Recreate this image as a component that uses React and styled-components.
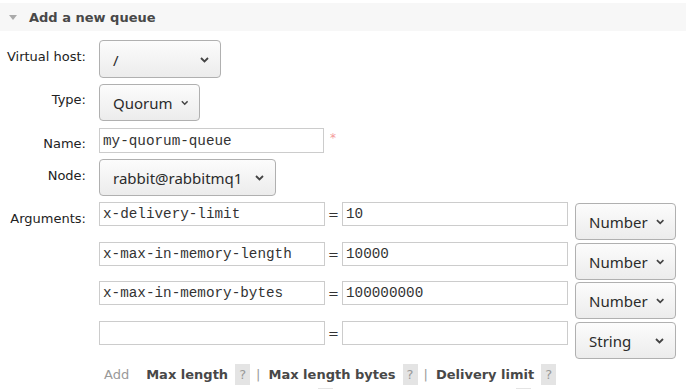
import React from 'react';
import styled, { createGlobalStyle } from 'styled-components';

const GlobalStyle = createGlobalStyle`
  body {
    margin: 0;
    background: #fff;
    font-family: "DejaVu Sans", Verdana, sans-serif;
    font-size: 13px;
    color: #222;
  }
`;

const Page = styled.div`
  padding-top: 3px;
`;

const SectionHead = styled.h2`
  margin: 0;
  height: 28px;
  display: flex;
  align-items: center;
  gap: 12px;
  padding-left: 9px;
  background: #f7f7f7;
  font-size: 13px;
  font-weight: bold;
  color: #484848;
`;

const Arrow = styled.span`
  width: 0;
  height: 0;
  border-left: 4px solid transparent;
  border-right: 4px solid transparent;
  border-top: 5px solid #aaa;
`;

const Form = styled.div`
  display: grid;
  grid-template-columns: 86px 1fr;
  column-gap: 13px;
  row-gap: 6px;
  padding-top: 9px;
`;

const Label = styled.div`
  text-align: right;
  white-space: nowrap;
  padding-top: ${p => p.$top || 8}px;
  color: #222;
`;

const Field = styled.div`
  display: flex;
  align-items: flex-start;
  padding-top: ${p => p.$top || 0}px;
`;

const SelectBox = styled.div`
  box-sizing: border-box;
  width: ${p => p.$w}px;
  height: ${p => p.$h || 37}px;
  margin-top: ${p => p.$top || 0}px;
  flex-shrink: 0;
  display: flex;
  align-items: center;
  justify-content: space-between;
  gap: 8px;
  padding: 1px 11px 0 13px;
  border: 1px solid #b0b0b0;
  border-radius: 4px;
  background: linear-gradient(#fcfcfc, #ececec);
  font-family: "Noto Sans", sans-serif;
  font-size: 15px;
  color: #2b2b2b;
  white-space: nowrap;
`;

const TextInput = styled.input`
  box-sizing: border-box;
  width: ${p => p.$w || 226}px;
  height: ${p => p.$h || 24}px;
  flex-shrink: 0;
  margin: 0;
  padding: 0 3px;
  border: 1px solid #ccc;
  border-radius: 0;
  background: #fff;
  font-family: "Liberation Mono", "DejaVu Sans Mono", monospace;
  font-size: 14.3px;
  color: #333;
  outline: none;
`;

const Required = styled.span`
  margin: 3px 0 0 6px;
  color: #f49a9a;
  font-size: 12px;
`;

const ArgCell = styled.div`
  display: flex;
  flex-direction: column;
`;

const ArgList = styled.div`
  display: flex;
  flex-direction: column;
  gap: 1.5px;
`;

const ArgRow = styled.div`
  display: flex;
  align-items: flex-start;
  height: 38px;
`;

const Eq = styled.span`
  width: 17px;
  height: 25px;
  display: flex;
  align-items: center;
  justify-content: center;
  color: #333;
`;

const TypeWrap = styled.div`
  margin-left: 7px;
`;

const Help = styled.div`
  display: flex;
  align-items: flex-start;
  margin-top: 5px;
  padding-left: 5px;
`;

const AddText = styled.span`
  height: 21px;
  line-height: 21px;
  margin-right: 17px;
  color: #999;
`;

const HelpLines = styled.div`
  display: flex;
  flex-direction: column;
  gap: 3px;
`;

const HelpLine = styled.div`
  display: flex;
  align-items: center;
  height: 21px;
  white-space: nowrap;
`;

const ArgLink = styled.span`
  font-weight: bold;
  color: #484848;
`;

const Q = styled.span`
  width: 15px;
  height: 21px;
  margin-left: 7px;
  display: flex;
  align-items: center;
  justify-content: center;
  background: #e4e4e4;
  color: #999;
`;

const Sep = styled.span`
  margin: 0 8px 0 6px;
  color: #999;
`;

function Chevron() {
  return (
    <svg width="9" height="6" viewBox="0 0 9 6">
      <polyline points="1,1 4.5,4.5 8,1" fill="none" stroke="#444" strokeWidth="1.8" />
    </svg>
  );
}

function Select({ value, w, h, top }) {
  return (
    <SelectBox $w={w} $h={h} $top={top}>
      <span>{value}</span>
      <Chevron />
    </SelectBox>
  );
}

const args = [
  { key: 'x-delivery-limit', value: '10', type: 'Number' },
  { key: 'x-max-in-memory-length', value: '10000', type: 'Number' },
  { key: 'x-max-in-memory-bytes', value: '100000000', type: 'Number' },
  { key: '', value: '', type: 'String' },
];

const helpLines = [
  ['Max length', 'Max length bytes', 'Delivery limit'],
  ['Max in memory length', 'Max in memory bytes'],
];

export default function App() {
  return (
    <Page>
      <GlobalStyle />
      <SectionHead>
        <Arrow />
        Add a new queue
      </SectionHead>
      <Form>
        <Label $top={9}>Virtual host:</Label>
        <Field>
          <Select value="/" w={122} h={38} />
        </Field>

        <Label>Type:</Label>
        <Field>
          <Select value="Quorum" w={101} />
        </Field>

        <Label $top={9}>Name:</Label>
        <Field $top={1}>
          <TextInput $w={225} $h={25} defaultValue="my-quorum-queue" />
          <Required>*</Required>
        </Field>

        <Label $top={9}>Node:</Label>
        <Field>
          <Select value="rabbit@rabbitmq1" w={177} />
        </Field>

        <Label $top={9}>Arguments:</Label>
        <ArgCell>
          <ArgList>
            {args.map((a, i) => (
              <ArgRow key={i}>
                <TextInput defaultValue={a.key} />
                <Eq>=</Eq>
                <TextInput defaultValue={a.value} />
                <TypeWrap>
                  <Select value={a.type} w={101} top={1} />
                </TypeWrap>
              </ArgRow>
            ))}
          </ArgList>
          <Help>
            <AddText>Add</AddText>
            <HelpLines>
              {helpLines.map((line, li) => (
                <HelpLine key={li}>
                  {line.map((l, i) => (
                    <React.Fragment key={l}>
                      {i > 0 && <Sep>|</Sep>}
                      <ArgLink>{l}</ArgLink>
                      <Q>?</Q>
                    </React.Fragment>
                  ))}
                </HelpLine>
              ))}
            </HelpLines>
          </Help>
        </ArgCell>
      </Form>
    </Page>
  );
}
